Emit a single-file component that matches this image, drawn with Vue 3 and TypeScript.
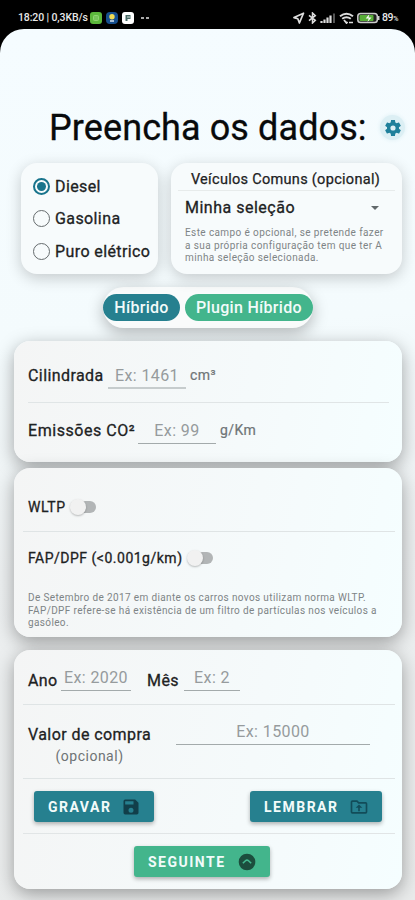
<script setup lang="ts">
import { ref } from 'vue'

const fuels: string[] = ['Diesel', 'Gasolina', 'Puro elétrico']
const fuel = ref<string>('Diesel')
const wltp = ref<boolean>(false)
const fap = ref<boolean>(false)
</script>

<template>
  <div class="screen">
    <header class="status">
      <span class="clock">18:20 | 0,3KB/s</span>
      <svg class="app-icon" viewBox="0 0 12 12"><rect width="12" height="12" rx="3" fill="#5cb83c" /><rect x="3" y="3" width="6" height="6" rx="2" fill="#8ed672" /><path d="M4 5h4M4 7h4" stroke="#4ba52e" stroke-width=".7" /></svg>
      <svg class="app-icon" viewBox="0 0 12 12"><rect width="12" height="12" rx="4" fill="#164f8e" /><circle cx="6" cy="4.8" r="2.7" fill="#f1dd55" /><path d="M4 9h4" stroke="#dbe6ef" stroke-width="1.5" /></svg>
      <svg class="app-icon" viewBox="0 0 12 12"><rect width="12" height="12" rx="3" fill="#fff" /><path d="M3.5 3h5v4h-3v2h-2z" fill="#466a65" /><path d="M5 5h3" stroke="#fff" stroke-width=".8" /></svg>
      <span class="dots"><i></i><i></i></span>
      <div class="system">
        <svg width="12" height="12" viewBox="0 0 12 12"><path d="M10.5 1.2 1 5.6l3.8 1.2L6.4 11z" fill="none" stroke="#ddd" stroke-width="1.7" stroke-linejoin="round" /></svg>
        <svg width="9" height="12" viewBox="0 0 9 12"><path d="m1 3.3 6.3 5L4.5 11V1l2.8 2.7-6.3 5" fill="none" stroke="#ddd" stroke-width="1.5" /></svg>
        <svg width="16" height="12" viewBox="0 0 16 12"><path d="M1.500 11V9M4.500 11V7.500M7.500 11V5.500M10.500 11V3.500" stroke="#ddd" stroke-width="2.200" /><path d="M14 11V1.500" stroke="#555" stroke-width="2" /></svg>
        <svg width="15" height="12" viewBox="0 0 15 12"><path d="M1 4.300q6.500-5 13 0M3.200 6.800q4.300-3.200 8.600 0" fill="none" stroke="#ddd" stroke-width="2" /><path d="m5 8 2.500 3 1-1.200" fill="none" stroke="#ddd" stroke-width="1.800" /><path d="M10 10.500h4" stroke="#ddd" stroke-width="1.500" /></svg>
        <svg width="23" height="12" viewBox="0 0 23 12"><rect x=".8" y="1.500" width="19.500" height="9" rx="2.800" fill="#222" stroke="#ccc" stroke-width="1.500" /><rect x="2.500" y="3" width="14" height="6" rx="1" fill="#58ad37" /><path d="m12.300 2.200-3.600 4.300h3l-1.200 3.500 4-4.600h-3z" fill="#fff" /><path d="M21.700 4v4" stroke="#ccc" stroke-width="1.600" /></svg>
        <span class="level">89<small>%</small></span>
      </div>
    </header>

    <main class="sheet">
      <div class="heading">
        <h1>Preencha os dados:</h1>
        <button class="gear" aria-label="Definições">
          <svg width="20" height="20" viewBox="0 0 24 24"><path fill="#1f809b" fill-rule="evenodd" d="M19.14 12.94c.04-.3.06-.61.06-.94s-.02-.64-.07-.94l2.03-1.58c.18-.14.23-.41.12-.61l-1.92-3.32c-.12-.22-.37-.29-.59-.22l-2.39.96c-.5-.38-1.03-.7-1.62-.94l-.36-2.54c-.04-.24-.24-.41-.48-.41h-3.84c-.24 0-.43.17-.47.41l-.36 2.54c-.59.24-1.13.57-1.62.94l-2.39-.96c-.22-.08-.47 0-.59.22L2.74 8.870c-.12.21-.08.47.12.61l2.030 1.580c-.05.3-.09.63-.09.94s.02.64.07.94l-2.030 1.580c-.18.14-.23.41-.12.61l1.920 3.320c.12.22.37.29.59.22l2.390-.96c.5.38 1.030.7 1.620.94l.36 2.540c.05.24.24.41.48.41h3.840c.24 0 .44-.17.47-.41l.36-2.540c.59-.24 1.130-.56 1.620-.94l2.390.96c.22.08.47 0 .59-.22l1.920-3.320c.12-.22.07-.47-.12-.61zM12 15.100A3.100 3.100 0 1 1 12 8.900a3.100 3.100 0 0 1 0 6.200" /></svg>
        </button>
      </div>

      <section class="top-row">
        <div class="card fuels">
          <label v-for="name in fuels" :key="name" class="fuel">
            <input v-model="fuel" type="radio" name="fuel" :value="name" />
            <span class="radio"></span>
            <span>{{ name }}</span>
          </label>
        </div>
        <div class="card common">
          <h2>Veículos Comuns (opcional)</h2>
          <div class="select"><span>Minha seleção</span><i class="caret"></i></div>
          <p class="note">Este campo é opcional, se pretende fazer<br />a sua própria configuração tem que ter A<br />minha seleção selecionada.</p>
        </div>
      </section>

      <div class="pills">
        <button class="pill teal">Híbrido</button>
        <button class="pill green">Plugin Híbrido</button>
      </div>

      <section class="card engine">
        <div class="line first">
          <span class="label">Cilindrada</span><input class="field cc" placeholder="Ex: 1461" /><span class="unit">cm³</span>
        </div>
        <div class="line">
          <span class="label emissions">Emissões CO²</span><input class="field" placeholder="Ex: 99" /><span class="unit">g/Km</span>
        </div>
      </section>

      <section class="card norms">
        <div class="toggle-line wltp">
          <span>WLTP</span><button class="switch" :class="{ on: wltp }" aria-label="WLTP" @click="wltp = !wltp"></button>
        </div>
        <div class="toggle-line fap">
          <span>FAP/DPF (&lt;0.001g/km)</span><button class="switch" :class="{ on: fap }" aria-label="FAP/DPF" @click="fap = !fap"></button>
        </div>
        <p class="note">De Setembro de 2017 em diante os carros novos utilizam norma WLTP.<br />FAP/DPF refere-se há existência de um filtro de partículas nos veículos a<br />gasóleo.</p>
      </section>

      <section class="card purchase">
        <div class="dates">
          <span class="label">Ano</span><input class="field year" placeholder="Ex: 2020" />
          <span class="label month-label">Mês</span><input class="field month" placeholder="Ex: 2" />
        </div>
        <div class="price">
          <div class="price-label"><span class="label">Valor de compra</span><span class="optional">(opcional)</span></div>
          <input class="field amount" placeholder="Ex: 15000" />
        </div>
        <div class="actions">
          <button class="btn teal save"><span>GRAVAR</span>
            <svg width="20" height="20" viewBox="0 0 24 24"><path fill="#113f4a" fill-rule="evenodd" d="M17 3H5a2 2 0 0 0-2 2v14a2 2 0 0 0 2 2h14a2 2 0 0 0 2-2V7zm-5 16a3 3 0 1 1 0-6 3 3 0 0 1 0 6m3-10H5V5h10z" /></svg>
          </button>
          <button class="btn teal recall"><span>LEMBRAR</span>
            <svg width="20" height="20" viewBox="0 0 24 24"><path fill="#124c59" d="M20 6h-8l-2-2H4a2 2 0 0 0-2 2v12a2 2 0 0 0 2 2h16a2 2 0 0 0 2-2V8a2 2 0 0 0-2-2m0 12H4V6h5.200l2 2H20zM11 17h2v-4h3l-4-4-4 4h3z" /></svg>
          </button>
        </div>
        <div class="next">
          <button class="btn green"><span>SEGUINTE</span>
            <svg width="20" height="20" viewBox="0 0 24 24"><circle cx="12" cy="12" r="10" fill="#1c4d3d" /><path d="m7 13.500 3.200-3a2.600 2.600 0 0 1 3.600 0l3.200 3" fill="none" stroke="#43b78e" stroke-width="2" /></svg>
          </button>
        </div>
      </section>
    </main>
  </div>
</template>

<style>
body {
  background: #000;
  overflow: hidden;
}
</style>

<style scoped>
* {
  box-sizing: border-box;
}
.screen {
  width: 415px;
  height: 900px;
  overflow: hidden;
  background: #000;
  font-family: Roboto, "Noto Sans", sans-serif;
  color: #1d2223;
}
h1, h2, p {
  margin: 0;
  font-weight: 400;
}
button, input {
  font-family: inherit;
  border: 0;
  padding: 0;
  margin: 0;
  background: none;
}
svg {
  display: block;
  flex: none;
}
.status {
  height: 29px;
  padding: 6px 16px 0 18px;
  display: flex;
  align-items: center;
  color: #e8e8e8;
}
.clock {
  width: 72px;
  font-size: 10.500px;
  font-weight: 500;
  letter-spacing: -.12px;
  white-space: nowrap;
}
.app-icon {
  width: 12px;
  height: 12px;
  margin-right: 4px;
}
.dots {
  display: flex;
  gap: 2px;
  margin-left: 3px;
}
.dots i {
  width: 3px;
  height: 2px;
  background: #aaa;
}
.system {
  display: flex;
  align-items: center;
  gap: 3px;
  margin-left: auto;
}
.level {
  font-size: 10.500px;
  font-weight: 500;
  letter-spacing: -.4px;
  width: 17px;
  margin-left: -1px;
}
.level small {
  font-size: 7px;
}
.sheet {
  height: 871px;
  border-radius: 24px 24px 0 0;
  background: linear-gradient(175deg, #f5fcff 0%, #f4fbfd 35%, #eceff0 60%, #e9ebeb 100%);
  overflow: hidden;
}
.heading {
  height: 134px;
  padding: 74px 10px 0 49px;
  display: flex;
  justify-content: space-between;
  align-items: flex-start;
}
h1 {
  font-size: 36px;
  line-height: 50px;
  letter-spacing: .1px;
  color: #080a0b;
  -webkit-text-stroke: .3px #080a0b;
  white-space: nowrap;
}
.gear {
  width: 25px;
  height: 25px;
  margin-top: 12px;
  border-radius: 50%;
  display: grid;
  place-items: center;
  background: #dceff4;
  box-shadow: 0 0 4px #dceff4;
}
.card {
  border-radius: 16px;
  background: linear-gradient(100deg, #f4f5f5 0%, #f5fafb 60%, #f5feff 100%);
  box-shadow: 0 5px 18px rgba(0, 0, 0, .34);
}
.top-row {
  display: flex;
  gap: 13px;
  padding: 0 13px 0 21px;
}
.top-row .card {
  height: 111px;
  background: #f7fbfc;
  box-shadow: 0 4px 15px rgba(0, 0, 0, .2);
}
.fuels {
  width: 137px;
  padding: 7px 0 0 12px;
}
.fuel {
  display: flex;
  align-items: center;
  height: 32.500px;
  gap: 5px;
  font-size: 16px;
  letter-spacing: .4px;
  -webkit-text-stroke: .3px #1d2223;
  white-space: nowrap;
}
.fuel input {
  position: absolute;
  opacity: 0;
}
.radio {
  width: 17px;
  height: 17px;
  border: 1.500px solid #666c6e;
  border-radius: 50%;
  flex: none;
  display: grid;
  place-items: center;
}
input:checked + .radio {
  border: 2px solid #18748c;
}
input:checked + .radio::after {
  content: "";
  width: 9px;
  height: 9px;
  border-radius: 50%;
  background: #18748c;
}
.common {
  width: 231px;
  padding: 0 7px;
}
h2 {
  height: 28px;
  padding-right: 2px;
  line-height: 33px;
  text-align: center;
  font-size: 14.500px;
  letter-spacing: .3px;
  -webkit-text-stroke: .25px #1d2223;
  border-bottom: 1px solid #e7ebeb;
  white-space: nowrap;
}
.select {
  height: 33px;
  display: flex;
  justify-content: space-between;
  align-items: center;
  padding: 0 16px 0 7px;
  font-size: 16px;
  letter-spacing: .5px;
  -webkit-text-stroke: .3px #1d2223;
}
.caret {
  border: 4px solid transparent;
  border-top-color: #62696b;
  border-bottom: 0;
}
.note {
  font-size: 10px;
  line-height: 12.700px;
  color: #7e8486;
  white-space: nowrap;
}
.common .note {
  padding: 3px 0 0 7px;
  letter-spacing: .4px;
}
.pills {
  width: 210px;
  height: 41px;
  margin: 13px 0 13px 103px;
  display: flex;
  align-items: center;
  justify-content: space-between;
  border-radius: 21px;
  background: #f9fbfb;
  box-shadow: 0 5px 16px rgba(0, 0, 0, .27);
}
.pill {
  height: 27px;
  border-radius: 14px;
  color: #f2fbfa;
  font-size: 16px;
  font-weight: 500;
  letter-spacing: .3px;
}
.pill.teal {
  width: 77px;
}
.pill.green {
  width: 128px;
}
.teal {
  background: #26808f;
}
.green {
  background: #43b58c;
}
.engine, .norms, .purchase {
  margin: 0 13px 0 14px;
}
.engine {
  height: 121px;
  padding: 7px 13px 0 14px;
}
.line {
  height: 54px;
  display: flex;
  align-items: center;
}
.line.first {
  height: 55px;
  border-bottom: 1px solid #e0e5e6;
}
.label {
  font-size: 16px;
  letter-spacing: .42px;
  -webkit-text-stroke: .3px #1d2223;
  white-space: nowrap;
}
.field {
  height: 26px;
  text-align: center;
  font-size: 16px;
  letter-spacing: .4px;
  border-bottom: 1px solid #a3aaab;
  border-radius: 0;
  min-width: 0;
}
.field::placeholder {
  color: #969b9d;
  opacity: 1;
}
.line .field {
  width: 78px;
  margin: 2px 4px 0 0;
}
.line .label {
  width: 80px;
  padding-top: 1px;
}
.line .emissions {
  width: 110px;
  letter-spacing: .55px;
}
.line .cc {
  border-bottom: 2px solid #c6cccd;
}
.unit {
  font-size: 14px;
  letter-spacing: .4px;
  color: #6f7577;
  -webkit-text-stroke: .2px #6f7577;
}
.norms {
  height: 169px;
  margin-top: 6px;
  padding: 13px 7px 0 9px;
}
.toggle-line {
  display: flex;
  align-items: center;
  gap: 4px;
  height: 51px;
  padding: 1px 0 0 5px;
  font-size: 14px;
  -webkit-text-stroke: .3px #1d2223;
}
.wltp {
  letter-spacing: .6px;
  border-bottom: 1px solid #dfe4e5;
}
.fap {
  letter-spacing: .5px;
}
.switch {
  width: 26px;
  height: 18px;
  display: flex;
  align-items: center;
  position: relative;
}
.switch::before {
  content: "";
  width: 23px;
  height: 12px;
  margin-left: 3px;
  border-radius: 6px;
  background: #b2b5b6;
}
.switch::after {
  content: "";
  position: absolute;
  left: 0;
  width: 16px;
  height: 16px;
  border-radius: 50%;
  background: #f1f1f1;
  box-shadow: 0 1px 2px rgba(0, 0, 0, .25);
}
.switch.on::after {
  left: 10px;
}
.norms .note {
  padding: 9px 0 0 5px;
  letter-spacing: .37px;
}
.purchase {
  height: 239px;
  margin-top: 13px;
  padding: 0 7px 0 9px;
}
.dates {
  height: 55px;
  display: flex;
  align-items: flex-start;
  padding: 20px 0 0 5px;
  border-bottom: 1px solid #dfe4e5;
}
.dates .label {
  line-height: 22px;
  width: 29px;
}
.dates .field {
  margin-top: -5px;
}
.year {
  width: 70px;
  margin-left: 4px;
}
.dates .month-label {
  width: 33px;
  margin-left: 16px;
}
.month {
  width: 56px;
  margin-left: 4px;
}
.price {
  height: 74px;
  display: flex;
  justify-content: space-between;
  align-items: flex-start;
  padding: 19px 25px 0 5px;
  border-bottom: 1px solid #dfe4e5;
}
.price-label {
  display: flex;
  flex-direction: column;
  align-items: center;
}
.price-label .label {
  line-height: 22px;
}
.optional {
  font-size: 14px;
  letter-spacing: .5px;
  line-height: 21px;
  color: #6e7375;
}
.amount {
  width: 194px;
  margin-top: -5px;
}
.actions {
  height: 55px;
  display: flex;
  justify-content: space-between;
  padding: 12px 13px 0 11px;
  border-bottom: 1px solid #e1e5e6;
}
.next {
  display: flex;
  padding: 12px 0 0 111px;
}
.btn {
  height: 31px;
  padding: 0 13px 0 14px;
  display: flex;
  align-items: center;
  justify-content: space-between;
  border-radius: 3px;
  color: #f2fbfa;
  font-size: 14px;
  font-weight: 700;
  letter-spacing: 1.500px;
  box-shadow: 0 2px 4px rgba(0, 0, 0, .3);
}
.save {
  width: 120px;
}
.recall {
  width: 132px;
}
.next .btn {
  width: 136px;
}
</style>
